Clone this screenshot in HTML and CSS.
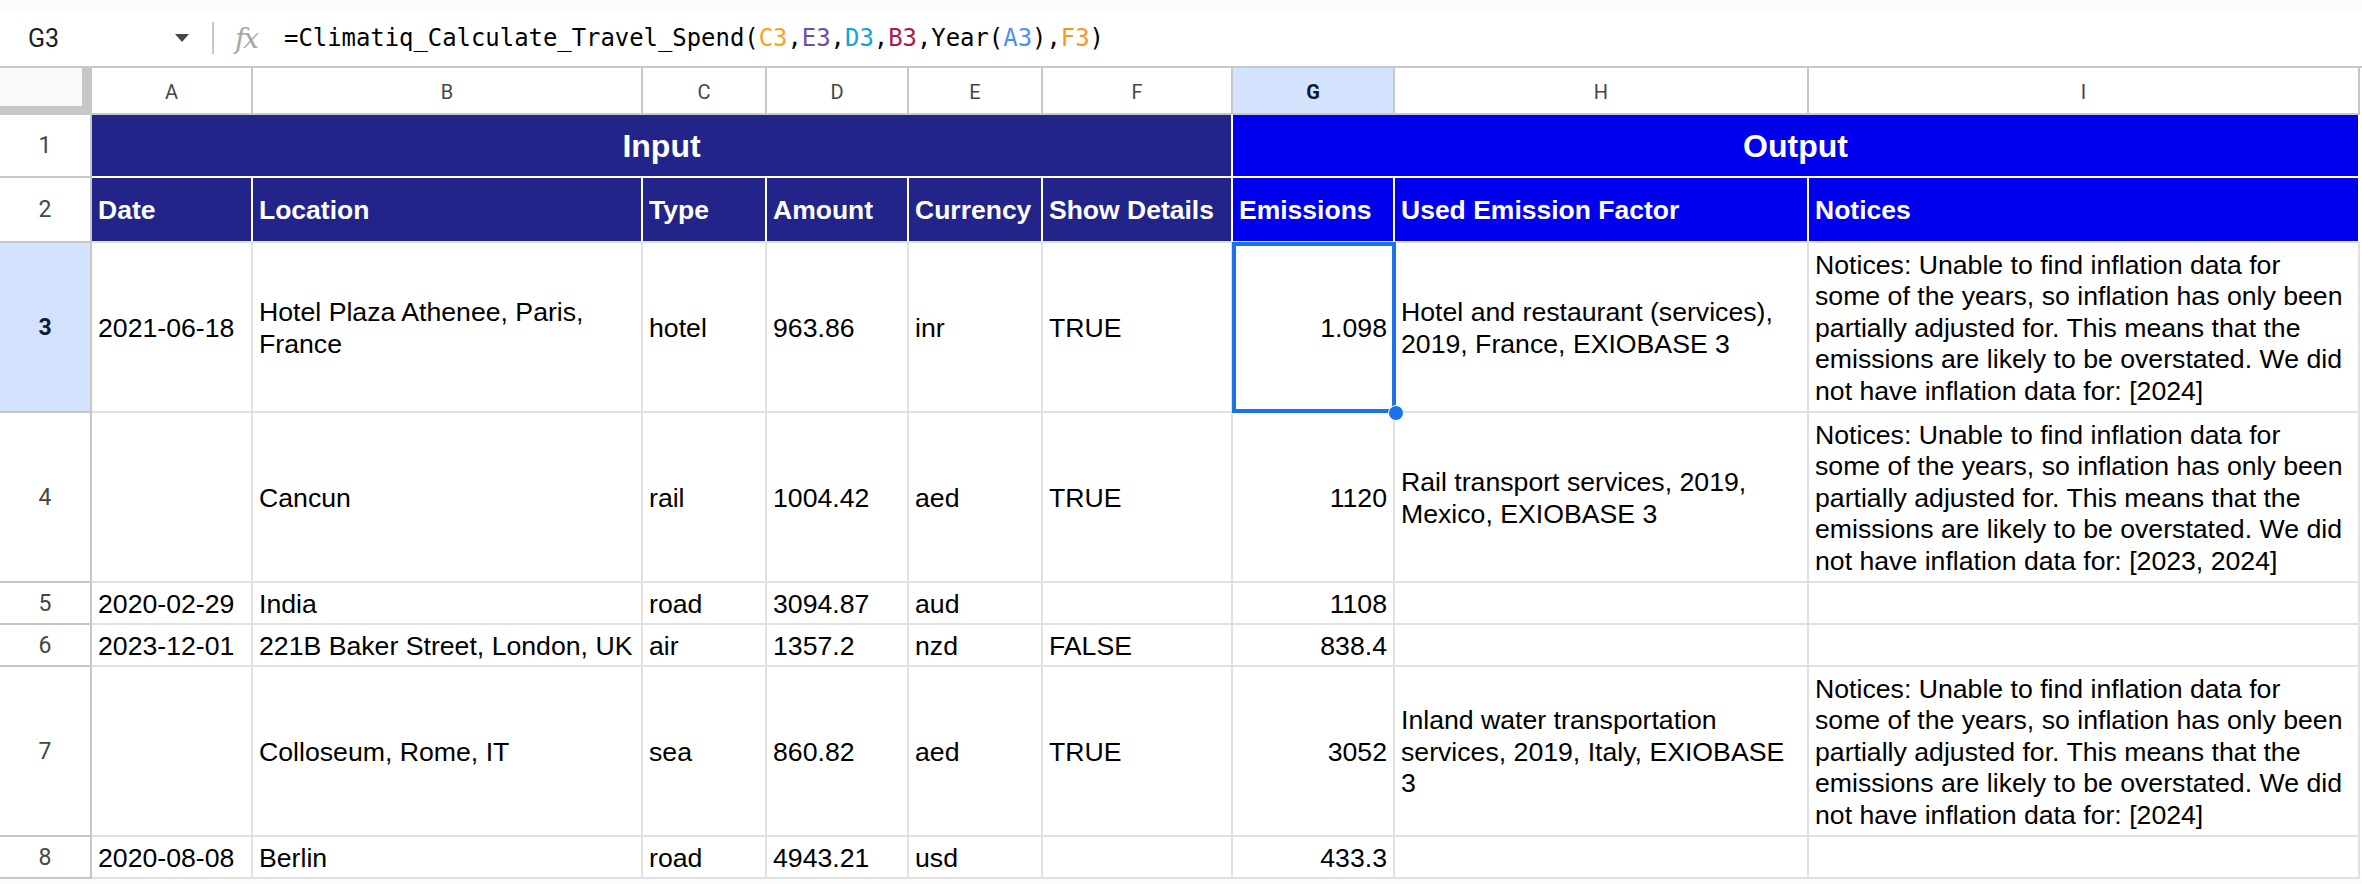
FILE: index.html
```html
<!DOCTYPE html>
<html>
<head>
<meta charset="utf-8">
<link rel="stylesheet" href="styles.css">
</head>
<body>
<div class="topstrip"></div>
<div class="fbar">
  <div class="namebox">
    <span class="ref">G3</span>
    <svg class="caret" width="14" height="8" viewBox="0 0 14 8"><polygon points="0,0 14,0 7,8" fill="#444746"/></svg>
  </div>
  <div class="sep"></div>
  <span class="fx">fx</span>
  <div class="formula">=Climatiq_Calculate_Travel_Spend(<span class="r1">C3</span>,<span class="r2">E3</span>,<span class="r3">D3</span>,<span class="r4">B3</span>,Year(<span class="r5">A3</span>),<span class="r6">F3</span>)</div>
</div>
<div class="sheet">
  <div class="corner"></div>
  <div class="ch">A</div><div class="ch">B</div><div class="ch">C</div><div class="ch">D</div><div class="ch">E</div><div class="ch">F</div><div class="ch selh">G</div><div class="ch">H</div><div class="ch">I</div>

  <div class="rh">1</div>
  <div class="h1 in">Input</div>
  <div class="h1 out">Output</div>

  <div class="rh">2</div>
  <div class="h2">Date</div><div class="h2">Location</div><div class="h2">Type</div><div class="h2">Amount</div><div class="h2">Currency</div><div class="h2">Show Details</div>
  <div class="h2 out">Emissions</div><div class="h2 out">Used Emission Factor</div><div class="h2 out">Notices</div>

  <div class="rh selr">3</div>
  <div class="c">2021-06-18</div>
  <div class="c wrap">Hotel Plaza Athenee, Paris, France</div>
  <div class="c">hotel</div>
  <div class="c">963.86</div>
  <div class="c">inr</div>
  <div class="c">TRUE</div>
  <div class="c num sel">1.098<span class="handle"></span></div>
  <div class="c wrap">Hotel and restaurant (services), 2019, France, EXIOBASE 3</div>
  <div class="c wrap">Notices: Unable to find inflation data for some of the years, so inflation has only been partially adjusted for. This means that the emissions are likely to be overstated. We did not have inflation data for: [2024]</div>

  <div class="rh">4</div>
  <div class="c"></div>
  <div class="c">Cancun</div>
  <div class="c">rail</div>
  <div class="c">1004.42</div>
  <div class="c">aed</div>
  <div class="c">TRUE</div>
  <div class="c num">1120</div>
  <div class="c wrap">Rail transport services, 2019, Mexico, EXIOBASE 3</div>
  <div class="c wrap">Notices: Unable to find inflation data for some of the years, so inflation has only been partially adjusted for. This means that the emissions are likely to be overstated. We did not have inflation data for: [2023, 2024]</div>

  <div class="rh">5</div>
  <div class="c">2020-02-29</div>
  <div class="c">India</div>
  <div class="c">road</div>
  <div class="c">3094.87</div>
  <div class="c">aud</div>
  <div class="c"></div>
  <div class="c num">1108</div>
  <div class="c"></div>
  <div class="c"></div>

  <div class="rh">6</div>
  <div class="c">2023-12-01</div>
  <div class="c">221B Baker Street, London, UK</div>
  <div class="c">air</div>
  <div class="c">1357.2</div>
  <div class="c">nzd</div>
  <div class="c">FALSE</div>
  <div class="c num">838.4</div>
  <div class="c"></div>
  <div class="c"></div>

  <div class="rh">7</div>
  <div class="c"></div>
  <div class="c">Colloseum, Rome, IT</div>
  <div class="c">sea</div>
  <div class="c">860.82</div>
  <div class="c">aed</div>
  <div class="c">TRUE</div>
  <div class="c num">3052</div>
  <div class="c wrap">Inland water transportation services, 2019, Italy, EXIOBASE 3</div>
  <div class="c wrap">Notices: Unable to find inflation data for some of the years, so inflation has only been partially adjusted for. This means that the emissions are likely to be overstated. We did not have inflation data for: [2024]</div>

  <div class="rh">8</div>
  <div class="c">2020-08-08</div>
  <div class="c">Berlin</div>
  <div class="c">road</div>
  <div class="c">4943.21</div>
  <div class="c">usd</div>
  <div class="c"></div>
  <div class="c num">433.3</div>
  <div class="c"></div>
  <div class="c"></div>
</div>
<div class="bottomstrip"></div>
</body>
</html>
```

FILE: styles.css
```css
html, body {
  margin: 0;
  padding: 0;
  background: #ffffff;
}
body {
  width: 2362px;
  height: 884px;
  overflow: hidden;
  font-family: "Liberation Sans", Arial, sans-serif;
  color: #000000;
}
.topstrip {
  height: 10px;
  background: #f9fbfd;
}
.fbar {
  height: 56px;
  border-bottom: 2px solid #c7c7c7;
  display: flex;
  align-items: center;
  background: #ffffff;
}
.namebox {
  width: 212px;
  box-sizing: border-box;
  padding-left: 28px;
  display: flex;
  align-items: center;
}
.namebox .ref {
  font-family: Roboto, "Liberation Sans", sans-serif;
  font-size: 25px;
  color: #1f1f1f;
  width: 147px;
}
.caret {
  display: block;
}
.sep {
  width: 2px;
  height: 32px;
  background: #c7c7c7;
}
.fx {
  margin-left: 21px;
  width: 30px;
  font-family: "DejaVu Serif", "Liberation Serif", serif;
  font-style: italic;
  font-size: 28px;
  color: #a6a6a6;
  letter-spacing: -2px;
}
.formula {
  margin-left: 19px;
  font-family: "DejaVu Sans Mono", "Liberation Mono", monospace;
  font-size: 23.9px;
  color: #000000;
  white-space: nowrap;
}
.r1 { color: #f4a522; }
.r2 { color: #6a4fa8; }
.r3 { color: #12a4d4; }
.r4 { color: #a61d4c; }
.r5 { color: #4d8df6; }
.r6 { color: #f49b1d; }

.sheet {
  display: grid;
  grid-template-columns: 92px 161px 390px 124px 142px 134px 190px 162px 414px 551px;
  grid-template-rows: 47px 63px 65px 170px 170px 42px 42px 170px 42px;
}
.sheet > div {
  box-sizing: border-box;
}
.corner {
  background: #f8f9fa;
  border-right: 10px solid #c7c7c7;
  border-bottom: 9px solid #c7c7c7;
}
.ch {
  border-right: 2px solid #c7c7c7;
  border-bottom: 2px solid #c7c7c7;
  padding-top: 2px;
  display: flex;
  align-items: center;
  justify-content: center;
  font-family: Roboto, "Liberation Sans", sans-serif;
  font-size: 20px;
  color: #444746;
}
.ch.selh {
  background: #d3e3fd;
  color: #0b1a33;
  font-weight: bold;
}
.rh {
  border-right: 2px solid #c7c7c7;
  border-bottom: 2px solid #c7c7c7;
  display: flex;
  align-items: center;
  justify-content: center;
  font-family: Roboto, "Liberation Sans", sans-serif;
  font-size: 23px;
  color: #444746;
}
.rh.selr {
  background: #d3e3fd;
  color: #0b1a33;
  font-weight: bold;
}
.h1 {
  background: #232489;
  color: #ffffff;
  font-weight: bold;
  font-size: 32px;
  border-right: 2px solid #ffffff;
  border-bottom: 2px solid #ffffff;
  padding-top: 2px;
  display: flex;
  align-items: center;
  justify-content: center;
}
.h1.in {
  grid-column: span 6;
}
.h1.out {
  grid-column: span 3;
}
.h2 {
  background: #232489;
  color: #ffffff;
  font-weight: bold;
  font-size: 26.5px;
  border-right: 2px solid #ffffff;
  border-bottom: 2px solid #e1e1e1;
  padding: 2px 6px 0 6px;
  display: flex;
  align-items: center;
  white-space: nowrap;
}
.out {
  background: #0000ef;
}
.c {
  border-right: 2px solid #e1e1e1;
  border-bottom: 2px solid #e1e1e1;
  padding: 3px 8px 0 6px;
  display: flex;
  align-items: center;
  font-size: 26.67px;
  line-height: 31.4px;
  white-space: nowrap;
}
.c.wrap {
  white-space: normal;
}
.c.num {
  justify-content: flex-end;
  text-align: right;
  padding-right: 6px;
}
.sel {
  position: relative;
}
.sel::before {
  content: "";
  position: absolute;
  left: -1px;
  top: -1px;
  right: -3px;
  bottom: -2px;
  border: 4px solid #1a73e8;
  pointer-events: none;
}
.handle {
  position: absolute;
  right: -11px;
  bottom: -10px;
  width: 14px;
  height: 14px;
  border: 1px solid #ffffff;
  border-radius: 50%;
  background: #1a73e8;
  z-index: 3;
}
.bottomstrip {
  height: 5px;
  background: #f9fbfd;
}
```
